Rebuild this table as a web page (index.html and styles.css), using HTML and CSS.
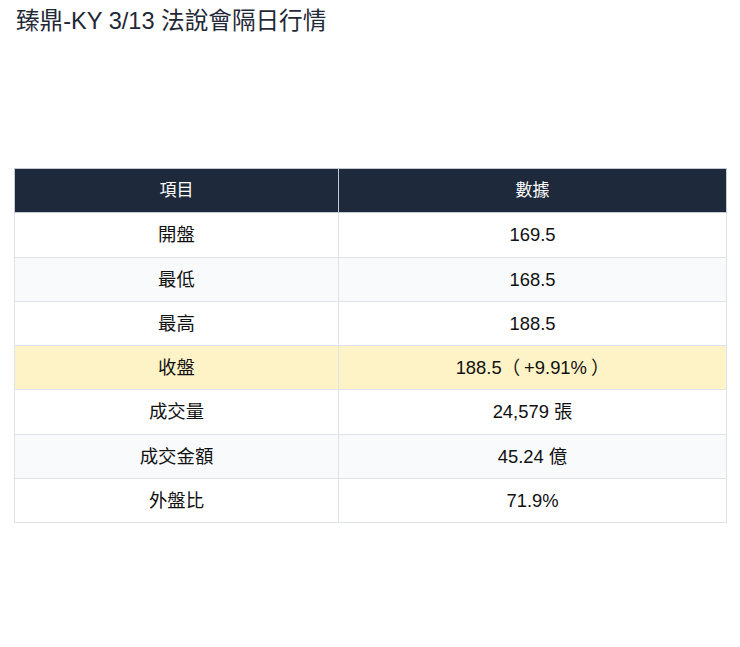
FILE: index.html
```html
<!DOCTYPE html>
<html lang="zh-Hant">
<head>
<meta charset="utf-8">
<link rel="stylesheet" href="styles.css">
</head>
<body>
<div class="page">
  <h1 class="title">臻鼎-KY 3/13 法說會隔日行情</h1>
  <table class="quote">
    <thead>
      <tr><th class="col-item">項目</th><th>數據</th></tr>
    </thead>
    <tbody>
      <tr><td>開盤</td><td>169.5</td></tr>
      <tr><td>最低</td><td>168.5</td></tr>
      <tr><td>最高</td><td>188.5</td></tr>
      <tr class="hl"><td>收盤</td><td>188.5<span class="po">（</span>+9.91%<span class="pc">）</span></td></tr>
      <tr><td>成交量</td><td>24,579 張</td></tr>
      <tr><td>成交金額</td><td>45.24 億</td></tr>
      <tr><td>外盤比</td><td>71.9%</td></tr>
    </tbody>
  </table>
</div>
</body>
</html>
```
FILE: styles.css
```css
html, body {
  margin: 0;
  padding: 0;
  background: #ffffff;
}
.page {
  padding: 7px 14px 0 14px;
  font-family: "Liberation Sans", Arial, "Noto Sans CJK TC", sans-serif;
  color: #111111;
}
.title {
  margin: 0 0 0 2px;
  font-size: 23.6px;
  line-height: 28px;
  font-weight: normal;
  color: #1f2937;
}
.quote {
  margin-top: 133px;
  width: 713px;
  border-collapse: collapse;
  font-size: 18.4px;
}
.quote th, .quote td {
  border: 1px solid #dfe3e9;
  padding: 12px 16px;
  line-height: 19.3px;
  text-align: center;
}
.quote th {
  background: #1e293b;
  color: #ffffff;
  font-weight: normal;
  font-size: 17px;
  border-color: #c3cad4;
}
.col-item {
  width: 291px;
}
.quote tbody tr:nth-child(even) td {
  background: #f8fafc;
}
.quote tbody tr.hl td {
  background: #fef3c7;
}
.po {
  padding-right: 4px;
}
.pc {
  padding-left: 4px;
}
```
